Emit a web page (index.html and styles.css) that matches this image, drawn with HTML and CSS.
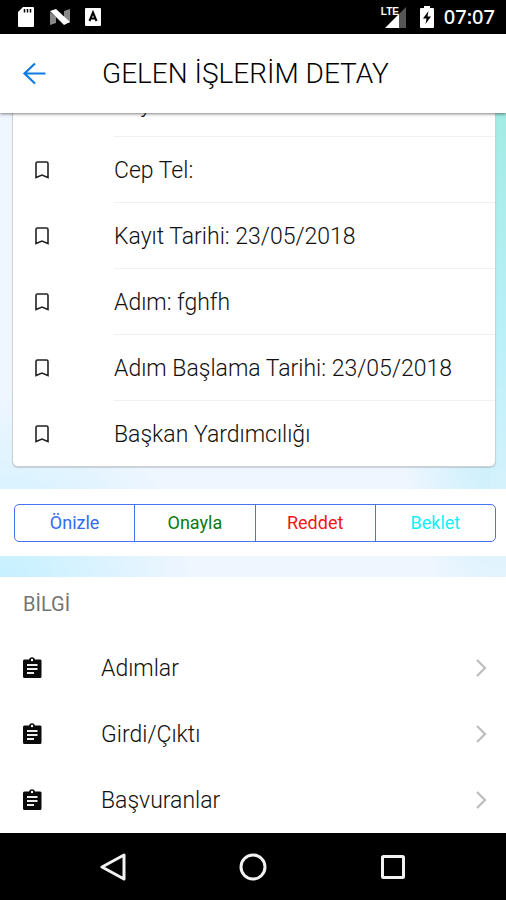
FILE: index.html
```html
<!DOCTYPE html>
<html lang="tr">
<head>
<meta charset="utf-8">
<meta name="viewport" content="width=device-width, initial-scale=1">
<title>Gelen İşlerim Detay</title>
<link rel="stylesheet" href="styles.css">
</head>
<body>
<svg class="defs" aria-hidden="true">
  <symbol id="bookmark" viewBox="0 0 16 20"><path d="M2 17.500V3.500Q2 2 3.500 2H12.500Q14 2 14 3.500V17.500L8 15Z" fill="none" stroke="#222" stroke-width="1.600"/></symbol>
  <symbol id="clipboard" viewBox="0 0 20 22"><path fill="#0a0a0a" d="M2.500 2.500H7a3.100 3.100 0 0 1 6 0h4.500A1.500 1.500 0 0 1 19.500 4v15.500a1.500 1.500 0 0 1-1.500 1.500h-15.500A1.500 1.500 0 0 1 1 19.500v-15.500A1.500 1.500 0 0 1 2.500 2.500Z"/><circle cx="10" cy="3" r="1.200" fill="#fff"/><path d="M5 8H15.500M5 12H15.500M5 16H12" stroke="#eee" stroke-width="2"/></symbol>
  <symbol id="chevron" viewBox="0 0 12 20"><path d="M1 2L9 10L1 18" fill="none" stroke="#bdbdbd" stroke-width="2.200"/></symbol>
</svg>

<div class="status">
  <div class="status-side">
    <svg width="18" height="22" viewBox="0 0 18 22"><path fill="#fff" d="M6 1H16Q17 1 17 2V20Q17 21 16 21H2Q1 21 1 20V6Z"/><path d="M7.500 3V6.500M10.500 3V6.500M13.500 3V6.500" stroke="#000" stroke-width="1.500"/></svg>
    <svg width="22" height="18" viewBox="0 0 22 18"><path fill="#888" d="M1 4L7 9V15L1 17ZM15 3L21 1V15L15 10Z"/><path fill="#fff" d="M1 3L7 1L21 14L15 17Z"/></svg>
    <svg width="16" height="18" viewBox="0 0 16 18"><rect width="16" height="18" rx="1" fill="#fff"/><path d="M4.500 13L8 4.500L11.500 13M6 10.500H10" fill="none" stroke="#000" stroke-width="2"/></svg>
  </div>
  <div class="status-side">
    <div class="signal"><span class="lte">LTE</span><svg width="21" height="21" viewBox="0 0 21 21"><path fill="#555" d="M21 0V21H14V7Z"/><path fill="#fff" d="M14 7V21H0Z"/></svg></div>
    <svg width="14" height="22" viewBox="0 0 14 22"><path fill="#fff" d="M4 0H10V2H13Q14 2 14 3V21Q14 22 13 22H1Q0 22 0 21V3Q0 2 1 2H4Z"/><path fill="#000" d="M8.500 5L3 12.500H6.500L5.500 18L11 10.500H7.500Z"/></svg>
    <time>07:07</time>
  </div>
</div>

<header class="toolbar">
  <button class="back" type="button" aria-label="Geri"><svg width="24" height="24" viewBox="0 0 24 24"><path d="M23.500 11.500H2M13 1.500L2.500 11.500L13 21.500" fill="none" stroke="#0f7be4" stroke-width="2.200"/></svg></button>
  <h1>GELEN İŞLERİM DETAY</h1>
</header>

<main class="content">
  <ul class="card">
    <li><svg class="mark"><use href="#bookmark"/></svg><span>Soyadı:</span></li>
    <li><svg class="mark"><use href="#bookmark"/></svg><span>Cep Tel:</span></li>
    <li><svg class="mark"><use href="#bookmark"/></svg><span>Kayıt Tarihi: 23/05/2018</span></li>
    <li><svg class="mark"><use href="#bookmark"/></svg><span>Adım: fghfh</span></li>
    <li><svg class="mark"><use href="#bookmark"/></svg><span>Adım Başlama Tarihi: 23/05/2018</span></li>
    <li><svg class="mark"><use href="#bookmark"/></svg><span>Başkan Yardımcılığı</span></li>
  </ul>
  <div class="actions">
    <div class="segment">
      <button class="preview" type="button">Önizle</button>
      <button class="approve" type="button">Onayla</button>
      <button class="reject" type="button">Reddet</button>
      <button class="hold" type="button">Beklet</button>
    </div>
  </div>
  <section class="info">
    <h2>BİLGİ</h2>
    <nav>
      <a href="#adimlar"><svg class="clip"><use href="#clipboard"/></svg><span>Adımlar</span><svg class="chev"><use href="#chevron"/></svg></a>
      <a href="#girdi"><svg class="clip"><use href="#clipboard"/></svg><span>Girdi/Çıktı</span><svg class="chev"><use href="#chevron"/></svg></a>
      <a href="#basvuranlar"><svg class="clip"><use href="#clipboard"/></svg><span>Başvuranlar</span><svg class="chev"><use href="#chevron"/></svg></a>
    </nav>
  </section>
</main>

<footer class="navbar">
  <button type="button" aria-label="Geri"><svg width="28" height="28" viewBox="0 0 28 28"><path d="M25 2V26L3 14Z" fill="none" stroke="#f2f2f2" stroke-width="3" stroke-linejoin="round"/></svg></button>
  <button type="button" aria-label="Ana ekran"><svg width="28" height="28" viewBox="0 0 28 28"><circle cx="14" cy="14" r="12" fill="none" stroke="#f2f2f2" stroke-width="3"/></svg></button>
  <button type="button" aria-label="Son uygulamalar"><svg width="28" height="28" viewBox="0 0 28 28"><rect x="3.500" y="3.500" width="21" height="21" rx="1" fill="none" stroke="#f2f2f2" stroke-width="3"/></svg></button>
</footer>
</body>
</html>
```
FILE: styles.css
```css
* { box-sizing: border-box; }

body {
  margin: 0;
  height: 100vh;
  display: flex;
  flex-direction: column;
  background: #fff;
  color: #111;
  font-family: Roboto, "Noto Sans", sans-serif;
  font-size: 23px;
  font-weight: 300;
  line-height: 28px;
}

.defs { position: absolute; width: 0; height: 0; }
svg { display: block; flex: none; }
button { margin: 0; padding: 0; border: 0; background: none; font: inherit; cursor: pointer; }

.status {
  flex: none;
  height: 34px;
  padding: 0 11px 0 17px;
  display: flex;
  justify-content: space-between;
  align-items: center;
  background: #000;
  color: #fff;
}
.status-side { display: flex; align-items: center; gap: 14px; }
.status-side time { margin-left: -4px; font-size: 20px; font-weight: 500; font-family: "Noto Sans", sans-serif; }
.signal { display: flex; align-items: flex-start; position: relative; padding-left: 4px; }
.lte {
  position: absolute;
  left: 0;
  top: 0;
  font: 700 10px/10px "Liberation Sans", sans-serif;
}

.toolbar {
  flex: none;
  position: relative;
  z-index: 1;
  height: 79px;
  padding: 0 22px;
  display: flex;
  align-items: center;
  gap: 56px;
  background: #fff;
  box-shadow: 0 1px 3px rgba(0, 0, 0, 0.5);
}
.toolbar h1 { margin: 0; font-size: 28px; line-height: 32px; font-weight: 300; color: #000; }

.content {
  flex: 1;
  min-height: 0;
  overflow: hidden;
  display: flex;
  flex-direction: column;
  justify-content: flex-end;
  background:
    radial-gradient(ellipse 200px 200px at 0 66%, #c4f0ff, transparent),
    linear-gradient(#a2ebe4, #b9f0f8 30%, #d8f2fd 55%, #e4f4fe 65%) right / 16px 100% no-repeat,
    radial-gradient(ellipse 110px 240px at 100% 40%, #bdeefa, transparent),
    #f0f6ff;
}
.content > * { flex: none; }

.card {
  list-style: none;
  margin: 0 10px 22px 12px;
  padding: 0;
  background: #fff;
  border: 1px solid #ccd0d2;
  border-radius: 6px;
  box-shadow: 0 1px 1px rgba(0, 0, 0, 0.15);
}
.card li { display: flex; align-items: center; height: 66px; padding-left: 21px; }
.card span {
  flex: 1;
  display: flex;
  align-items: center;
  height: 66px;
  margin-left: 64px;
  padding-top: 3px;
  border-bottom: 1px solid #f0f0f0;
}
.card li:last-child { height: 65px; }
.card li:last-child span { height: 65px; border-bottom: 0; }
.mark { width: 16px; height: 20px; }

.actions { margin-bottom: 21px; padding: 15px 10px 14px 14px; background: #fff; }
.segment {
  display: flex;
  height: 38px;
  border: 1px solid #4774ee;
  border-radius: 5px;
}
.segment button { flex: 1; font-size: 18px; line-height: 24px; font-weight: 400; }
.segment button + button { border-left: 1px solid #4774ee; }
.segment .preview { color: #326bf2; }
.segment .approve { color: #0b7a0b; }
.segment .reject { color: #f01818; }
.segment .hold { color: #12f0f8; }

.info { background: #fff; }
.info h2 { margin: 0; padding: 14px 23px 18px; font-size: 20px; line-height: 26px; font-weight: 400; color: #757575; }
.info a {
  display: flex;
  align-items: center;
  height: 66px;
  padding: 0 18px 0 22px;
  color: inherit;
  text-decoration: none;
}
.info a span { flex: 1; margin-left: 59px; padding-top: 2px; }
.clip { width: 20px; height: 22px; }
.chev { width: 12px; height: 20px; }

.navbar {
  flex: none;
  height: 67px;
  padding: 0 43px;
  display: flex;
  background: #000;
}
.navbar button { flex: 1; display: flex; align-items: center; justify-content: center; }
```
